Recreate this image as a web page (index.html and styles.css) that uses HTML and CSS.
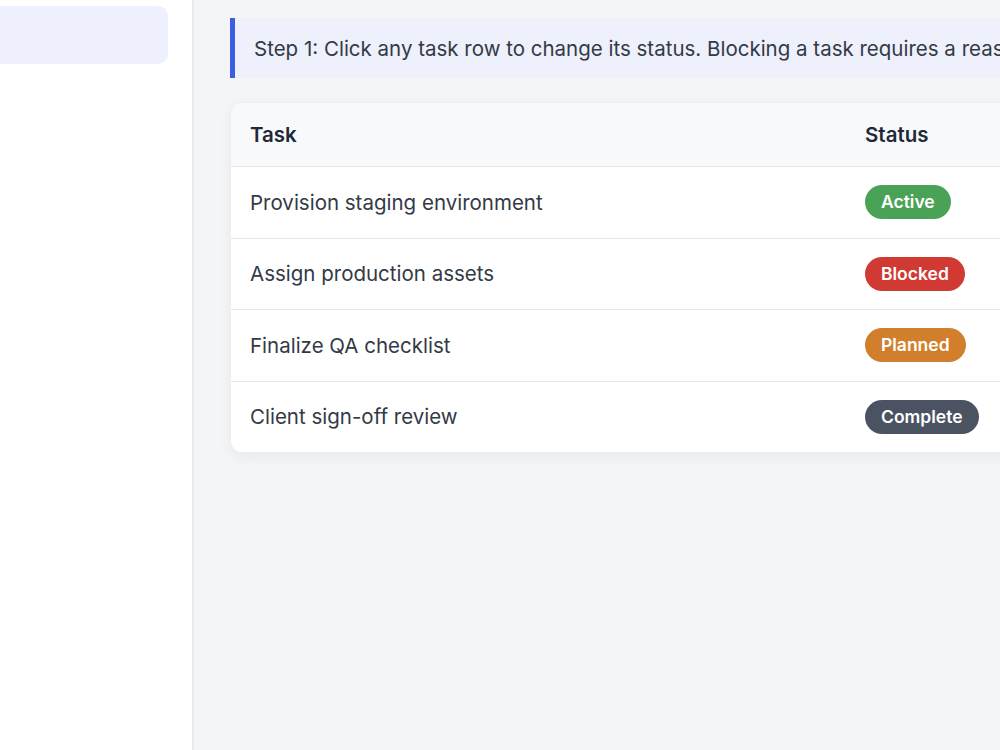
FILE: index.html
```html
<!DOCTYPE html>
<html lang="en">
<head>
    <meta charset="UTF-8">
    <meta name="viewport" content="width=device-width, initial-scale=1.0">
    <title>Task Status Walkthrough</title>
    <link rel="stylesheet" href="styles.css">
</head>
<body>
    <div class="layout">
        <aside class="sidebar">
            <a class="nav-item active" href="#"></a>
        </aside>

        <main class="main">
            <div class="hint">
                Step 1: Click any task row to change its status. Blocking a task requires a reason before it can be saved.
            </div>

            <div class="task-card">
                <table class="task-table">
                    <thead>
                        <tr>
                            <th class="col-task">Task</th>
                            <th>Status</th>
                        </tr>
                    </thead>
                    <tbody>
                        <tr>
                            <td>Provision staging environment</td>
                            <td><span class="badge badge-active">Active</span></td>
                        </tr>
                        <tr>
                            <td>Assign production assets</td>
                            <td><span class="badge badge-blocked">Blocked</span></td>
                        </tr>
                        <tr>
                            <td>Finalize QA checklist</td>
                            <td><span class="badge badge-planned">Planned</span></td>
                        </tr>
                        <tr>
                            <td>Client sign-off review</td>
                            <td><span class="badge badge-complete">Complete</span></td>
                        </tr>
                    </tbody>
                </table>
            </div>
        </main>
    </div>
</body>
</html>
```

FILE: styles.css
```css
body {
    margin: 0;
    font-family: Inter, "Noto Sans", sans-serif;
    background-color: #f4f5f7;
    color: #374151;
    overflow: hidden;
}
.layout {
    display: flex;
    height: 750px;
    width: 1200px;
}
.sidebar {
    width: 192px;
    flex-shrink: 0;
    background: #ffffff;
    border-right: 2px solid #e8e9ed;
    padding-top: 6px;
    overflow: hidden;
}
.nav-item {
    display: block;
    height: 58px;
    width: 180px;
    margin-left: -12px;
    border-radius: 10px;
    background: #eef0fd;
}
.main {
    flex: 1;
    padding: 18px 36px;
}
.hint {
    height: 60px;
    box-sizing: border-box;
    display: flex;
    align-items: center;
    padding-left: 19px;
    background: #eef0fb;
    border-left: 5px solid #3b5fe0;
    font-size: 20.5px;
    color: #333a46;
    white-space: nowrap;
    overflow: hidden;
}
.task-card {
    margin-top: 24px;
    background: #ffffff;
    border: 1px solid #eceef2;
    border-radius: 12px;
    box-shadow: 0 4px 14px rgba(17, 24, 39, 0.05);
    overflow: hidden;
}
.task-table {
    width: 100%;
    border-collapse: collapse;
}
.task-table th {
    text-align: left;
    font-size: 20.5px;
    font-weight: 600;
    color: #1f2937;
    background: #f8f9fb;
    height: 63px;
    padding: 0 19px;
    border-bottom: 1px solid #e5e7eb;
}
.task-table .col-task {
    width: 577px;
}
.task-table td {
    font-size: 20.5px;
    color: #333a46;
    height: 70.5px;
    padding: 0 19px;
    border-bottom: 1px solid #e5e7eb;
}
.task-table tbody tr:last-child td {
    border-bottom: none;
}
.badge {
    display: inline-block;
    padding: 6px 16px;
    line-height: 22px;
    border-radius: 999px;
    font-size: 17.5px;
    font-weight: 600;
    color: #ffffff;
}
.badge-active {
    background: #4aa257;
}
.badge-blocked {
    background: #d03a33;
}
.badge-planned {
    background: #d27f2d;
}
.badge-complete {
    background: #4b5261;
}
```
